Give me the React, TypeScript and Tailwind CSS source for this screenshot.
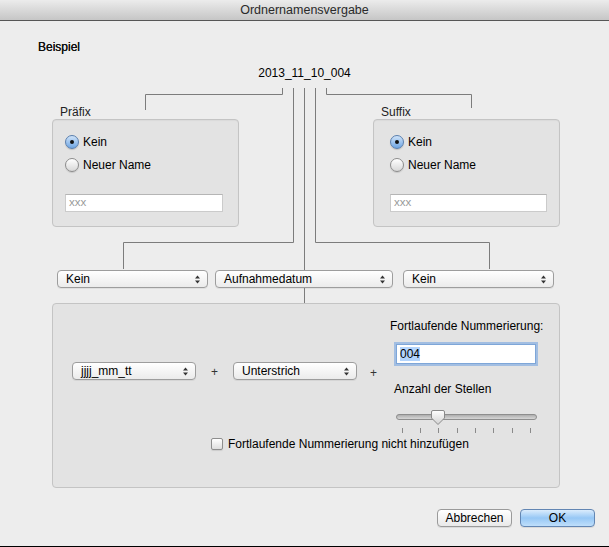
import React from "react";

const font = { fontFamily: '"Liberation Sans", Arial, sans-serif' };

const Radio = ({ on, label }: { on?: boolean; label: string }) => (
  <div className="flex items-center gap-[4px] h-[14px]">
    {on ? (
      <div className="w-[14px] h-[14px] rounded-full border border-[#5a7fae] bg-linear-to-b from-[#cfe3f8] to-[#6fa6e3] flex items-center justify-center shadow-[0_1px_1px_rgba(0,0,0,0.15)]">
        <div className="w-[4px] h-[4px] rounded-full bg-[#111]" />
      </div>
    ) : (
      <div className="w-[14px] h-[14px] rounded-full border border-[#8c8c8c] bg-linear-to-b from-white to-[#d8d8d8] shadow-[0_1px_1px_rgba(0,0,0,0.12)]" />
    )}
    <span className="text-[12px] leading-[14px] text-black">{label}</span>
  </div>
);

const Arrows = () => (
  <svg width="5" height="9" viewBox="0 0 5 9" className="shrink-0">
    <path d="M2.5 0.5 L5 3.5 H0 Z" fill="#333" />
    <path d="M2.5 8.5 L5 5.5 H0 Z" fill="#333" />
  </svg>
);

const Popup = ({ label, w }: { label: string; w: string }) => (
  <div
    className={`${w} h-[18px] rounded-[4px] border border-[#9d9d9d] bg-linear-to-b from-white to-[#ebebeb] shadow-[0_1px_0_rgba(0,0,0,0.06)] flex items-center justify-between pl-[8px] pr-[7px] shrink-0`}
  >
    <span className="text-[12px] leading-[14px] text-black">{label}</span>
    <Arrows />
  </div>
);

const NameBox = ({ title, inset, inputW }: { title: string; inset: string; inputW: string }) => (
  <div className="flex flex-col w-[187px]">
    <div className="pl-[8px] text-[12px] leading-[14px] text-[#222]">{title}</div>
    <div
      className={`h-[108px] rounded-[4px] border border-[#c4c4c4] bg-[#e3e3e3] shadow-[inset_0_1px_1px_rgba(0,0,0,0.04)] flex flex-col pt-[15px] ${inset}`}
    >
      <div className="flex flex-col gap-[9px]">
        <Radio on label="Kein" />
        <Radio label="Neuer Name" />
      </div>
      <div
        className={`mt-[22px] ${inputW} h-[18px] bg-white border border-[#cbcbcb] border-t-[#b5b5b5] flex items-center pl-[3px] text-[11.5px] text-[#9a9a9a]`}
      >
        xxx
      </div>
    </div>
  </div>
);

export default function App() {
  return (
    <div
      className="relative w-[609px] h-[547px] bg-[#ededed] border-b border-black overflow-hidden flex flex-col"
      style={font}
    >
      {/* title bar */}
      <div className="h-[21px] shrink-0 bg-linear-to-b from-[#ececec] to-[#c6c6c6] border-b border-[#565656] text-center text-[12.5px] leading-[20px] text-[#2a2a2a]">
        Ordnernamensvergabe
      </div>

      <div className="mt-[19px] pl-[38px] text-[12px] leading-[15px] text-[#111] [text-shadow:0_0_0.5px_#000]">Beispiel</div>

      <div className="mt-[11px] text-center text-[12px] leading-[14px] text-black">2013_11_10_004</div>

      {/* prefix / suffix */}
      <div className="mt-[25px] flex justify-between pl-[52px] pr-[49px]">
        <NameBox title="Präfix" inset="pl-[12px]" inputW="w-[158px]" />
        <NameBox title="Suffix" inset="pl-[16px]" inputW="w-[157px]" />
      </div>

      {/* popups */}
      <div className="mt-[43px] flex pl-[57px]">
        <Popup label="Kein" w="w-[151px]" />
        <div className="w-[7px]" />
        <Popup label="Aufnahmedatum" w="w-[178px]" />
        <div className="w-[10px]" />
        <Popup label="Kein" w="w-[151px]" />
      </div>

      {/* date panel */}
      <div className="mt-[15px] ml-[52px] w-[508px] h-[185px] rounded-[4px] border border-[#c4c4c4] bg-[#e3e3e3] flex flex-col pt-[15px]">
        <div className="flex">
          <div className="ml-[19px] mt-[43px] flex items-center h-[18px]">
            <Popup label="jjjj_mm_tt" w="w-[124px]" />
            <div className="w-[37px] text-center text-[12px] leading-[14px] text-[#333] pt-[2px]">+</div>
            <Popup label="Unterstrich" w="w-[124px]" />
            <div className="w-[33px] text-center text-[12px] leading-[14px] text-[#333] pt-[4px]">+</div>
          </div>
          <div className="flex flex-col">
            <div className="text-[12px] leading-[14px] text-black">Fortlaufende Nummerierung:</div>
            <div className="mt-[11px] ml-[6px] w-[140px] h-[20px] bg-white border border-[#7ea6d8] shadow-[0_0_0_2px_rgba(110,160,225,0.55)] flex items-center pl-[3px]">
              <span className="bg-[#b3d4fc] text-[12px] leading-[14px] text-black">004</span>
            </div>
            <div className="mt-[18px] ml-[4px] text-[12px] leading-[14px] text-black">Anzahl der Stellen</div>
            <svg width="146" height="27" viewBox="0 0 146 27" className="mt-[12px] ml-[3px]">
              <defs>
                <linearGradient id="trk" x1="0" y1="0" x2="0" y2="1">
                  <stop offset="0" stopColor="#a9a9a9" />
                  <stop offset="1" stopColor="#dcdcdc" />
                </linearGradient>
                <linearGradient id="knb" x1="0" y1="0" x2="0" y2="1">
                  <stop offset="0" stopColor="#ffffff" />
                  <stop offset="1" stopColor="#d2d2d2" />
                </linearGradient>
              </defs>
              <rect x="3.5" y="6.5" width="140" height="5" rx="2.5" fill="url(#trk)" stroke="#8e8e8e" />
              <path
                d="M38.5 4 Q38.5 2.5 40 2.5 H50 Q51.5 2.5 51.5 4 V10 L45 16.5 L38.5 10 Z"
                fill="url(#knb)"
                stroke="#8a8a8a"
              />
              {[9, 27, 45, 64, 82, 100, 119, 137].map((x) => (
                <line key={x} x1={x + 0.5} y1="20" x2={x + 0.5} y2="25" stroke="#8a8a8a" />
              ))}
            </svg>
          </div>
        </div>
        <div className="mt-[2px] pl-[158px] flex items-center gap-[5px] h-[14px]">
          <div className="w-[12px] h-[12px] rounded-[2px] border border-[#8e8e8e] bg-linear-to-b from-white to-[#dedede] shadow-[0_1px_1px_rgba(0,0,0,0.1)]" />
          <span className="text-[12px] leading-[14px] text-black">Fortlaufende Nummerierung nicht hinzufügen</span>
        </div>
      </div>

      {/* buttons */}
      <div className="mt-[21px] flex justify-end gap-[8px] pr-[14px]">
        <div className="w-[75px] h-[18px] rounded-[4px] border border-[#9a9a9a] bg-linear-to-b from-white to-[#e9e9e9] shadow-[0_1px_0_rgba(0,0,0,0.08)] flex items-center justify-center text-[12px] text-black">
          Abbrechen
        </div>
        <div className="w-[75px] h-[18px] rounded-[4px] border border-[#6286b3] bg-linear-to-b from-[#dbecfc] via-[#96c7f5] to-[#bfdffb] shadow-[0_1px_0_rgba(0,0,0,0.08)] flex items-center justify-center text-[12px] text-black">
          OK
        </div>
      </div>

      {/* connector lines */}
      <svg width="609" height="547" className="absolute left-0 top-0 pointer-events-none" fill="none" stroke="#7c7c7c">
        <path d="M282.5 88 V94.5 H145.5 V110" />
        <path d="M293.5 88 V242.5 H123.5 V269" />
        <path d="M304.5 88 V270" />
        <path d="M304.5 288 V303" />
        <path d="M315.5 88 V242.5 H489.5 V269" />
        <path d="M326.5 88 V94.5 H471.5 V108" />
      </svg>
    </div>
  );
}
